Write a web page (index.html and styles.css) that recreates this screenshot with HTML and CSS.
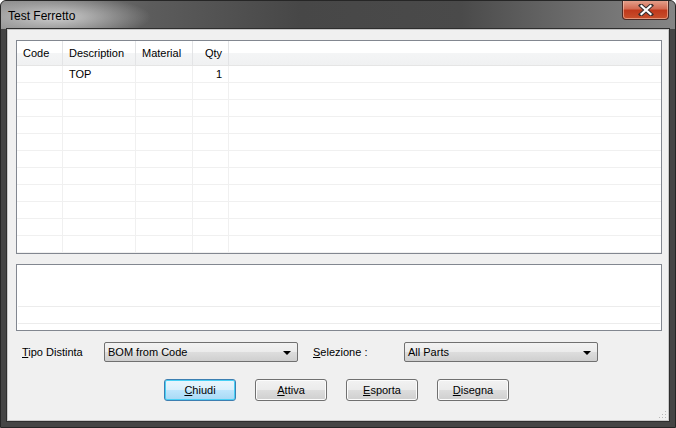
FILE: index.html
```html
<!doctype html>
<html>
<head>
<meta charset="UTF-8">
<title>Test Ferretto</title>
<link rel="stylesheet" href="styles.css">
</head>
<body>
	<div class="window">
		<div class="titlebar">
			<span class="title">Test Ferretto</span>
			<div class="close-btn">
				<svg width="18" height="12" viewBox="0 0 18 12">
					<path d="M4 1.5 L14 10.5 M14 1.5 L4 10.5" stroke="#3a3030" stroke-width="4.2" stroke-linecap="square"/>
					<path d="M4.5 2 L13.5 10 M13.5 2 L4.5 10" stroke="#ffffff" stroke-width="2.2" stroke-linecap="square"/>
				</svg>
			</div>
		</div>
		<div class="client">
			<div class="listview">
				<div class="lv-header">
					<div class="col c-code">Code</div>
					<div class="col c-desc">Description</div>
					<div class="col c-mat">Material</div>
					<div class="col c-qty num">Qty</div>
					<div class="col c-fill"></div>
				</div>
				<div class="lv-row">
					<div class="col c-code"></div>
					<div class="col c-desc">TOP</div>
					<div class="col c-mat"></div>
					<div class="col c-qty num">1</div>
					<div class="col c-fill"></div>
				</div>
				<div class="lv-row"><div class="col c-code"></div><div class="col c-desc"></div><div class="col c-mat"></div><div class="col c-qty"></div><div class="col c-fill"></div></div>
				<div class="lv-row"><div class="col c-code"></div><div class="col c-desc"></div><div class="col c-mat"></div><div class="col c-qty"></div><div class="col c-fill"></div></div>
				<div class="lv-row"><div class="col c-code"></div><div class="col c-desc"></div><div class="col c-mat"></div><div class="col c-qty"></div><div class="col c-fill"></div></div>
				<div class="lv-row"><div class="col c-code"></div><div class="col c-desc"></div><div class="col c-mat"></div><div class="col c-qty"></div><div class="col c-fill"></div></div>
				<div class="lv-row"><div class="col c-code"></div><div class="col c-desc"></div><div class="col c-mat"></div><div class="col c-qty"></div><div class="col c-fill"></div></div>
				<div class="lv-row"><div class="col c-code"></div><div class="col c-desc"></div><div class="col c-mat"></div><div class="col c-qty"></div><div class="col c-fill"></div></div>
				<div class="lv-row"><div class="col c-code"></div><div class="col c-desc"></div><div class="col c-mat"></div><div class="col c-qty"></div><div class="col c-fill"></div></div>
				<div class="lv-row"><div class="col c-code"></div><div class="col c-desc"></div><div class="col c-mat"></div><div class="col c-qty"></div><div class="col c-fill"></div></div>
				<div class="lv-row"><div class="col c-code"></div><div class="col c-desc"></div><div class="col c-mat"></div><div class="col c-qty"></div><div class="col c-fill"></div></div>
				<div class="lv-row last"><div class="col c-code"></div><div class="col c-desc"></div><div class="col c-mat"></div><div class="col c-qty"></div><div class="col c-fill"></div></div>
			</div>

			<div class="memo">
				<div class="memo-line"></div>
				<div class="memo-line"></div>
			</div>

			<div class="options">
				<span class="lbl lbl-tipo"><u>T</u>ipo Distinta</span>
				<div class="combo combo-tipo">
					<span>BOM from Code</span>
					<svg class="arrow" width="8" height="4" viewBox="0 0 8 4"><path d="M0 0 H8 L4 4 Z" fill="#000"/></svg>
				</div>
				<span class="lbl lbl-sel"><u>S</u>elezione :</span>
				<div class="combo combo-sel">
					<span>All Parts</span>
					<svg class="arrow" width="8" height="4" viewBox="0 0 8 4"><path d="M0 0 H8 L4 4 Z" fill="#000"/></svg>
				</div>
			</div>

			<div class="buttons">
				<div class="btn default"><u>C</u>hiudi</div>
				<div class="btn"><u>A</u>ttiva</div>
				<div class="btn"><u>E</u>sporta</div>
				<div class="btn"><u>D</u>isegna</div>
			</div>

			<svg class="grip" width="10" height="10" viewBox="0 0 10 10">
				<rect x="8" y="2" width="1" height="1" fill="#b8b8b8"/>
				<rect x="5" y="5" width="1" height="1" fill="#b8b8b8"/>
				<rect x="8" y="5" width="1" height="1" fill="#b8b8b8"/>
				<rect x="2" y="8" width="1" height="1" fill="#b8b8b8"/>
				<rect x="5" y="8" width="1" height="1" fill="#b8b8b8"/>
				<rect x="8" y="8" width="1" height="1" fill="#b8b8b8"/>
			</svg>
		</div>
	</div>
</body>
</html>
```

FILE: styles.css
```css
body {
	margin: 0;
	padding: 0;
	background-color: #ffffff;
	font-family: "Liberation Sans", Arial, sans-serif;
	font-size: 11px;
	color: #000;
}

.window {
	width: 676px;
	height: 428px;
	box-sizing: border-box;
	border-radius: 6px 6px 0 0;
	background-color: #454545;
	border: 1px solid #262626;
	display: flex;
	flex-direction: column;
	position: relative;
	overflow: hidden;
}

.titlebar {
	height: 28px;
	flex: none;
	display: flex;
	align-items: center;
	padding-left: 7px;
	background:
		radial-gradient(ellipse 95px 22px at 55px 16px, rgba(220,220,220,0.85) 0%, rgba(200,200,200,0.4) 60%, rgba(200,200,200,0) 100%),
		linear-gradient(90deg, #8a8a8a 0px, #5c5c5c 150px, #474747 300px, #4a4a4a 460px, #6e6e6e 580px, #858585 676px);
}

.title {
	font-size: 12px;
	color: #000;
	margin-top: 1px;
}

.close-btn {
	position: absolute;
	top: -1px;
	right: 6px;
	width: 47px;
	height: 20px;
	box-sizing: border-box;
	border: 1px solid #4a2a26;
	border-top: none;
	border-radius: 0 0 4px 4px;
	background: linear-gradient(180deg, #e6a591 0%, #d36c54 45%, #c0391c 55%, #c8502c 100%);
	box-shadow: inset 0 0 0 1px rgba(255,220,200,0.5);
	display: flex;
	align-items: center;
	justify-content: center;
}

.client {
	flex: 1;
	margin: 0 6px 6px 6px;
	border: 1px solid #c8c8c8;
	box-shadow: 0 0 0 1px #2e2e2e;
	background-color: #f0f0f0;
	padding: 10px 6px 0 8px;
	position: relative;
	display: flex;
	flex-direction: column;
}

.listview {
	height: 214px;
	box-sizing: border-box;
	border: 1px solid #828790;
	background-color: #fff;
	overflow: hidden;
}

.lv-header {
	display: flex;
	height: 24px;
	background: linear-gradient(180deg, #ffffff 0%, #ffffff 50%, #f4f5f6 52%, #f0f1f2 100%);
	border-bottom: 1px solid #e5e5e5;
}

.lv-header .col {
	border-right: 1px solid #e3e4e6;
	line-height: 25px;
	padding: 0 6px;
}

.lv-row {
	display: flex;
	height: 16px;
	border-bottom: 1px solid #f0f0f0;
}

.lv-row .col {
	border-right: 1px solid #f0f0f0;
	line-height: 16px;
	padding: 0 6px;
}

.col {
	box-sizing: border-box;
	flex: none;
	white-space: nowrap;
}

.c-code { width: 46px; }
.c-desc { width: 73px; }
.c-mat { width: 57px; }
.c-qty { width: 36px; }
.c-fill { flex: 1; border-right: none !important; }

.num {
	text-align: right;
}

.memo {
	margin-top: 10px;
	height: 67px;
	box-sizing: border-box;
	border: 1px solid #828790;
	background-color: #fff;
	padding: 41px 1px 0 1px;
}

.memo-line {
	height: 16px;
	border-top: 1px solid #ececec;
}

.options {
	display: flex;
	align-items: center;
	margin-top: 11px;
	height: 20px;
}

.lbl {
	white-space: nowrap;
}

.lbl-tipo {
	margin-left: 6px;
	width: 82px;
}

.lbl-sel {
	margin-left: 15px;
	width: 91px;
}

.combo {
	height: 20px;
	box-sizing: border-box;
	border: 1px solid #707070;
	border-radius: 2px;
	background: linear-gradient(180deg, #f2f2f2 0%, #ebebeb 50%, #dddddd 51%, #cfcfcf 100%);
	display: flex;
	align-items: center;
	justify-content: space-between;
	padding: 0 6px 0 3px;
}

.combo-tipo { width: 194px; }
.combo-sel { width: 194px; }

.arrow {
	margin-top: 1px;
}

.buttons {
	display: flex;
	margin-top: 17px;
	padding-left: 148px;
	gap: 19px;
}

.btn {
	width: 72px;
	height: 22px;
	box-sizing: border-box;
	border: 1px solid #707070;
	border-radius: 3px;
	background: linear-gradient(180deg, #f2f2f2 0%, #ebebeb 50%, #dddddd 51%, #cfcfcf 100%);
	box-shadow: inset 0 0 0 1px #fcfcfc;
	text-align: center;
	line-height: 20px;
}

.btn.default {
	border-color: #3c7fb1;
	background: linear-gradient(180deg, #eaf6fd 0%, #d9f0fc 50%, #bee6fd 51%, #a7d9f5 100%);
	box-shadow: inset 0 0 0 1px #48d0f5;
}

.grip {
	position: absolute;
	right: 1px;
	bottom: 1px;
}
```
